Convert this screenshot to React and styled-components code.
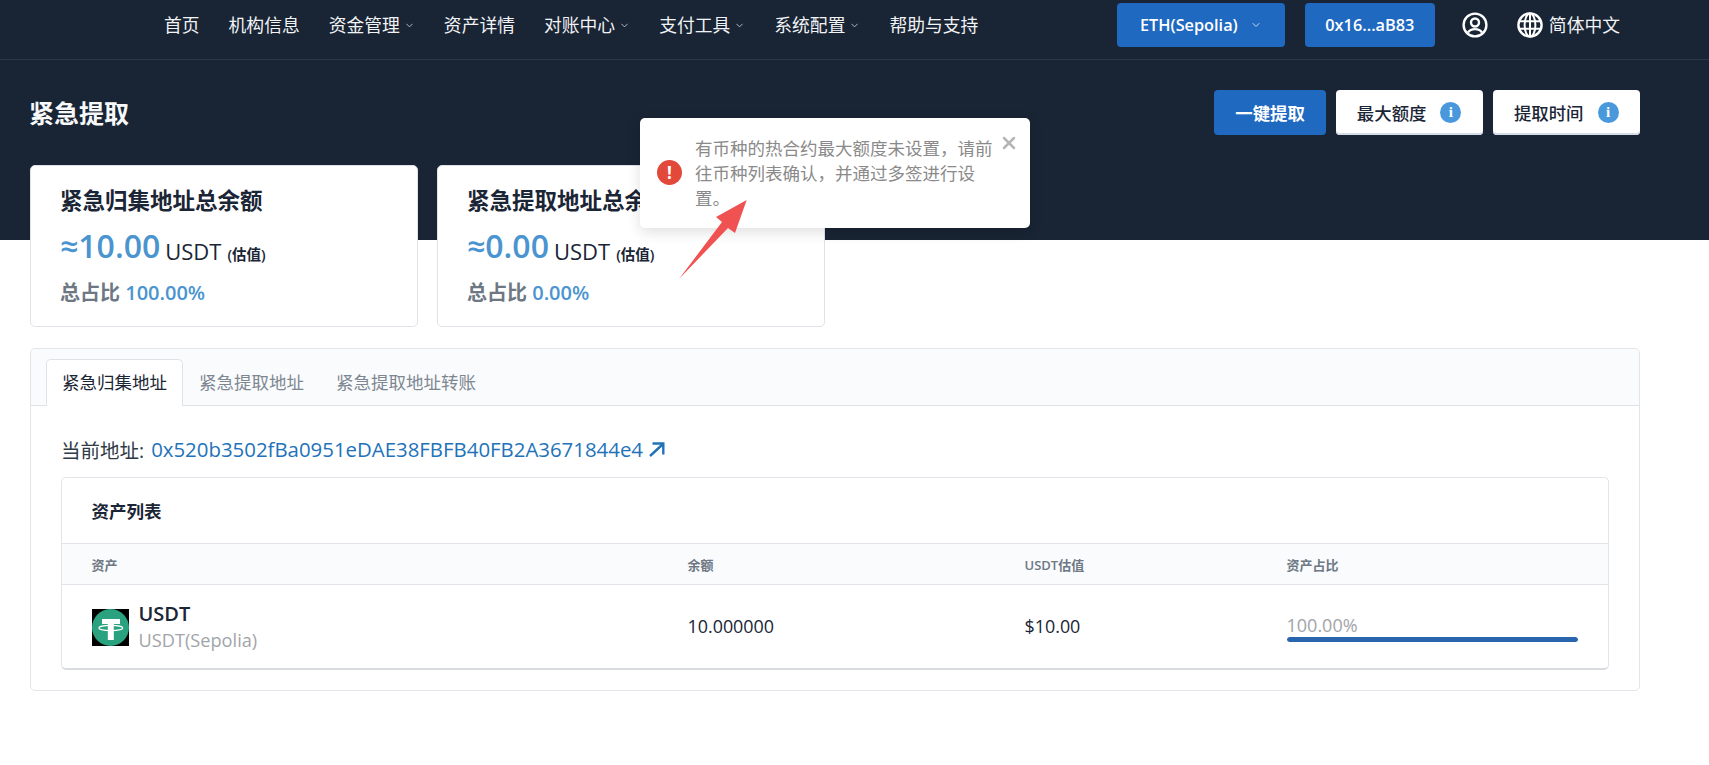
import React from "react";
import styled, { createGlobalStyle } from "styled-components";
import { ChevronDown, X } from "lucide-react";

const GlobalStyle = createGlobalStyle`
  html, body {
    margin: 0;
    padding: 0;
    background: #fff;
    font-family: "Open Sans", "Noto Sans CJK SC", sans-serif;
    color: #1a2535;
  }
  * { box-sizing: border-box; }
`;

const Page = styled.div`
  position: relative;
  width: 1709px;
  height: 765px;
  overflow: hidden;
`;

// dark top area
const Hero = styled.div`
  background: #192434;
  height: 240px;
`;

const Nav = styled.nav`
  height: 60px;
  border-bottom: 1px solid #2b3646;
  display: flex;
  align-items: center;
  padding: 0 89px 9px 164px;
`;

const NavMenu = styled.div`
  display: flex;
  align-items: center;
  gap: 29px;
  flex: 1;
`;

const NavItem = styled.a`
  display: flex;
  align-items: center;
  gap: 4px;
  padding-bottom: 2px;
  color: #f1f3f5;
  font-size: 17.8px;
  svg { margin-top: 3px; color: #d0d5db; }
`;

const NavRight = styled.div`
  display: flex;
  align-items: center;
`;

const WalletButton = styled.button`
  height: 44px;
  width: ${(p) => p.$width}px;
  margin-right: ${(p) => p.$gap}px;
  border: 0;
  border-radius: 4px;
  background: #1f69c1;
  color: #fff;
  font-family: inherit;
  font-size: 16.3px;
  font-weight: 600;
  display: flex;
  align-items: center;
  justify-content: center;
  gap: 12px;
  svg { color: #c7dbf3; }
`;

const IconSlot = styled.span`
  display: flex;
  color: #fff;
  margin-right: ${(p) => p.$gap}px;
`;

const Lang = styled.span`
  padding-bottom: 2px;
  color: #f1f3f5;
  font-size: 17.8px;
`;

const TitleBar = styled.div`
  display: flex;
  align-items: center;
  justify-content: space-between;
  padding: 30px 69px 0 29px;
`;

const PageTitle = styled.h1`
  margin: -2px 0 0;
  font-size: 25px;
  font-weight: 700;
  color: #f7f8f9;
`;

const Actions = styled.div`
  display: flex;
  gap: 10px;
`;

const ActionButton = styled.button`
  height: 45px;
  padding: 0 ${(p) => (p.$primary ? 21 : 21.5)}px 0 21px;
  border: 0;
  border-radius: 4px;
  background: ${(p) => (p.$primary ? "#1f69c1" : "#fff")};
  box-shadow: ${(p) => (p.$primary ? "none" : "inset 0 -2px 0 #d5dce5")};
  color: ${(p) => (p.$primary ? "#fff" : "#1a2535")};
  font-family: inherit;
  font-size: 17.4px;
  font-weight: ${(p) => (p.$primary ? 600 : 500)};
  display: flex;
  align-items: center;
  gap: 14px;
`;

const InfoDot = styled.span`
  width: 21px;
  height: 21px;
  border-radius: 50%;
  background: #4a98dc;
  color: #fff;
  display: flex;
  align-items: center;
  justify-content: center;
  font-family: "Liberation Serif", serif;
  font-size: 15px;
  font-weight: 700;
`;

const Content = styled.main`
  padding: 0 69px 0 30px;
  margin-top: -75px;
`;

const StatRow = styled.div`
  display: flex;
  gap: 19px;
`;

const StatCard = styled.section`
  width: 388px;
  height: 162px;
  padding: 20px 30px 0 29px;
  background: #fff;
  border: 1px solid #dfe3e8;
  border-radius: 5px;
`;

const StatTitle = styled.h3`
  margin: 0;
  font-size: 22.5px;
  line-height: 30px;
  font-weight: 700;
  color: #1a2535;
`;

const StatValue = styled.div`
  margin-top: 8px;
  height: 44px;
  display: flex;
  align-items: baseline;
  line-height: 44px;
`;

const Amount = styled.span`
  font-size: 32px;
  font-weight: 600;
  color: #4a94d0;
  margin-right: 5px;
`;

const Unit = styled.span`
  font-size: 22px;
  font-weight: 500;
  color: #1a2535;
  margin-right: 6px;
  transform: translateY(2px);
`;

const Estimate = styled.span`
  font-size: 14.5px;
  font-weight: 600;
  color: #1a2535;
  transform: translateY(2px);
`;

const Share = styled.div`
  margin-top: 11px;
  line-height: 28px;
  font-size: 20px;
  font-weight: 600;
  color: #6d7884;
  span { color: #4a94d0; }
`;

const TabsCard = styled.section`
  margin-top: 21px;
  height: 343px;
  border: 1px solid #e2e6ea;
  border-radius: 5px;
  background: #fff;
`;

const TabBar = styled.div`
  height: 57px;
  padding: 10px 0 0 15px;
  display: flex;
  background: #fafbfd;
  border-bottom: 1px solid #dfe3e8;
  border-radius: 5px 5px 0 0;
`;

const Tab = styled.a`
  height: 47px;
  padding: 0 15px 4px;
  display: flex;
  align-items: center;
  font-size: 17.5px;
  color: ${(p) => (p.$active ? "#1a2535" : "#7d8791")};
  background: ${(p) => (p.$active ? "#fff" : "transparent")};
  border: 1px solid ${(p) => (p.$active ? "#dfe3e8" : "transparent")};
  border-bottom: 0;
  border-radius: 5px 5px 0 0;
`;

const TabBody = styled.div`
  padding: 28px 30px 0;
`;

const AddressLine = styled.div`
  height: 30px;
  display: flex;
  align-items: center;
  font-size: 19.5px;
  color: #2f3a47;
`;

const AddressLink = styled.a`
  margin-left: 7px;
  display: flex;
  align-items: center;
  gap: 5px;
  font-size: 20.4px;
  color: #2272ba;
`;

const TableCard = styled.div`
  margin-top: 13px;
  height: 193px;
  border: 1px solid #e1e4e8;
  border-bottom: 2px solid #d8dbdf;
  border-radius: 5px;
`;

const TableTitle = styled.div`
  height: 66px;
  padding-left: 29.500px;
  display: flex;
  align-items: center;
  font-size: 17.5px;
  font-weight: 600;
  color: #1a2535;
  border-bottom: 1px solid #e1e4e8;
`;

const Row = styled.div`
  display: grid;
  grid-template-columns: 596px 337px 262px 1fr;
  padding: 0 30px 0 29.500px;
  align-items: center;
`;

const HeadRow = styled(Row)`
  height: 41px;
  background: #fafbfd;
  border-bottom: 1px solid #e1e4e8;
  font-size: 13px;
  font-weight: 600;
  color: #6d7884;
`;

const BodyRow = styled(Row)`
  height: 84px;
  font-size: 17.9px;
  color: #1a2535;
`;

const ValueCell = styled.span`
  padding-bottom: 3px;
`;

const AssetCell = styled.div`
  display: flex;
  align-items: center;
  gap: 10px;
`;

const AssetText = styled.div`
  display: flex;
  flex-direction: column;
`;

const AssetName = styled.span`
  font-size: 20px;
  line-height: 26px;
  font-weight: 600;
  color: #1a2535;
`;

const AssetSub = styled.span`
  font-size: 18.2px;
  line-height: 26px;
  color: #a1a5a9;
`;

const Percent = styled.div`
  font-size: 18px;
  line-height: 24px;
  color: #a1a5a9;
`;

const ProgressTrack = styled.div`
  height: 5px;
  width: 291px;
  border-radius: 3px;
  background: #e9ecef;
  overflow: hidden;
`;

const ProgressFill = styled.div`
  height: 100%;
  background: #2a66ae;
  border-radius: 3px;
`;

// floating toast over the header
const Toast = styled.div`
  position: absolute;
  left: 640px;
  top: 118px;
  width: 390px;
  height: 110px;
  padding: 18px 36px 0 55px;
  background: #fff;
  border-radius: 5px;
  box-shadow: 0 4px 14px rgba(0, 0, 0, 0.13);
  font-size: 17.5px;
  line-height: 25px;
  color: #8a8a8a;
`;

const ToastIcon = styled.span`
  position: absolute;
  left: 17px;
  top: 42px;
  width: 25px;
  height: 25px;
  border-radius: 50%;
  background: #e2493b;
  color: #fff;
  display: flex;
  align-items: center;
  justify-content: center;
  font-size: 17px;
  font-weight: 700;
`;

const ToastClose = styled.span`
  position: absolute;
  right: 11px;
  top: 15px;
  display: flex;
  color: #b5b5b5;
`;

const Arrow = styled.svg`
  position: absolute;
  left: 670px;
  top: 190px;
`;

function UserIcon() {
  return (
    <svg width="26" height="26" viewBox="0 0 26 26" fill="none" stroke="currentColor" strokeWidth="2.4">
      <circle cx="13" cy="13" r="11.4" />
      <circle cx="13" cy="10.5" r="4" />
      <path d="M6 20.500c1.500-2.400 3.900-3.400 7-3.400s5.500 1 7 3.400" />
    </svg>
  );
}

function GlobeIcon() {
  return (
    <svg width="26" height="26" viewBox="0 0 26 26" fill="none" stroke="currentColor" strokeWidth="2">
      <circle cx="13" cy="13" r="11.600" strokeWidth="2.400" />
      <ellipse cx="13" cy="13" rx="5.400" ry="11.600" />
      <path d="M13 1.500v23M2.500 9.300h21M2.500 16.700h21" />
    </svg>
  );
}

function LinkArrow() {
  return (
    <svg width="17" height="15" viewBox="0 0 17 15" fill="none" stroke="currentColor" strokeWidth="2.4">
      <path d="M2 14 14.500 2.500M4.500 1.500h10.800v11" />
    </svg>
  );
}

function TetherIcon() {
  return (
    <svg width="37" height="37" viewBox="0 0 37 37">
      <rect width="37" height="37" fill="#000" />
      <circle cx="18.500" cy="18.500" r="18.500" fill="#2aa27f" />
      <rect x="10" y="10" width="18" height="5" fill="#fff" />
      <rect x="15.800" y="10" width="6" height="21" fill="#fff" />
      <ellipse cx="18.800" cy="19" rx="12" ry="2.600" fill="none" stroke="#fff" strokeWidth="1.100" />
    </svg>
  );
}

const navItems = [
  { label: "首页" },
  { label: "机构信息" },
  { label: "资金管理", menu: true },
  { label: "资产详情" },
  { label: "对账中心", menu: true },
  { label: "支付工具", menu: true },
  { label: "系统配置", menu: true },
  { label: "帮助与支持" },
];

function StatBox({ title, amount, share }) {
  return (
    <StatCard>
      <StatTitle>{title}</StatTitle>
      <StatValue>
        <Amount>≈{amount}</Amount>
        <Unit>USDT</Unit>
        <Estimate>(估值)</Estimate>
      </StatValue>
      <Share>
        总占比 <span>{share}</span>
      </Share>
    </StatCard>
  );
}

export default function App() {
  return (
    <Page>
      <GlobalStyle />
      <Hero>
        <Nav>
          <NavMenu>
            {navItems.map((item) => (
              <NavItem key={item.label}>
                {item.label}
                {item.menu && <ChevronDown size={11} strokeWidth={1.8} />}
              </NavItem>
            ))}
          </NavMenu>
          <NavRight>
            <WalletButton $width={168} $gap={20}>
              ETH(Sepolia)
              <ChevronDown size={12} strokeWidth={2} />
            </WalletButton>
            <WalletButton $width={130} $gap={27}>0x16...aB83</WalletButton>
            <IconSlot $gap={29}><UserIcon /></IconSlot>
            <IconSlot $gap={6}><GlobeIcon /></IconSlot>
            <Lang>简体中文</Lang>
          </NavRight>
        </Nav>
        <TitleBar>
          <PageTitle>紧急提取</PageTitle>
          <Actions>
            <ActionButton $primary>一键提取</ActionButton>
            <ActionButton>最大额度<InfoDot>i</InfoDot></ActionButton>
            <ActionButton>提取时间<InfoDot>i</InfoDot></ActionButton>
          </Actions>
        </TitleBar>
      </Hero>

      <Content>
        <StatRow>
          <StatBox title="紧急归集地址总余额" amount="10.00" share="100.00%" />
          <StatBox title="紧急提取地址总余额" amount="0.00" share="0.00%" />
        </StatRow>

        <TabsCard>
          <TabBar>
            <Tab $active>紧急归集地址</Tab>
            <Tab>紧急提取地址</Tab>
            <Tab>紧急提取地址转账</Tab>
          </TabBar>
          <TabBody>
            <AddressLine>
              当前地址:
              <AddressLink>
                0x520b3502fBa0951eDAE38FBFB40FB2A3671844e4
                <LinkArrow />
              </AddressLink>
            </AddressLine>
            <TableCard>
              <TableTitle>资产列表</TableTitle>
              <HeadRow>
                <span>资产</span>
                <span>余额</span>
                <span>USDT估值</span>
                <span>资产占比</span>
              </HeadRow>
              <BodyRow>
                <AssetCell>
                  <TetherIcon />
                  <AssetText>
                    <AssetName>USDT</AssetName>
                    <AssetSub>USDT(Sepolia)</AssetSub>
                  </AssetText>
                </AssetCell>
                <ValueCell>10.000000</ValueCell>
                <ValueCell>$10.00</ValueCell>
                <div>
                  <Percent>100.00%</Percent>
                  <ProgressTrack>
                    <ProgressFill style={{ width: "100%" }} />
                  </ProgressTrack>
                </div>
              </BodyRow>
            </TableCard>
          </TabBody>
        </TabsCard>
      </Content>

      <Toast>
        <ToastIcon>!</ToastIcon>
        有币种的热合约最大额度未设置，请前往币种列表确认，并通过多签进行设置。
        <ToastClose><X size={20} strokeWidth={3} /></ToastClose>
      </Toast>
      <Arrow width="80" height="92" viewBox="0 0 80 92">
        <path d="M76.700 10 L65 43 L58 38 L9 89 L52 32 L46 27 Z" fill="#f05252" />
      </Arrow>
    </Page>
  );
}
